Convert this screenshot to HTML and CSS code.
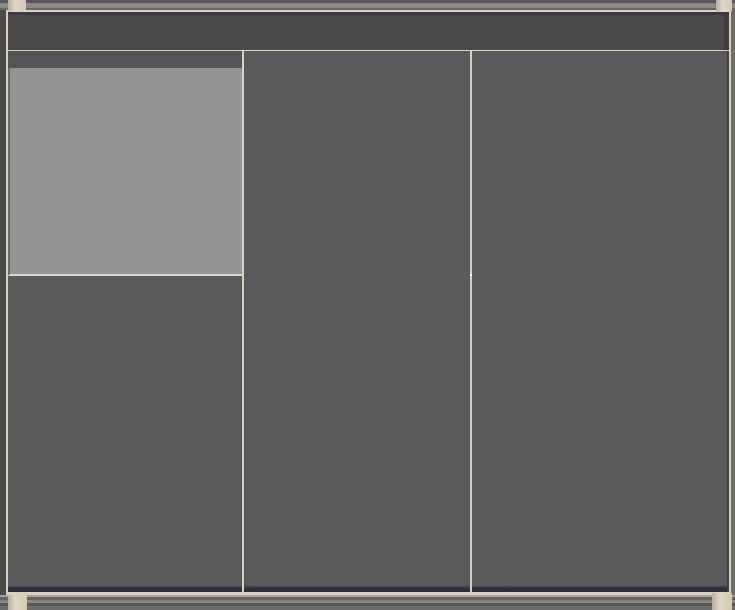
FILE: index.html
```html
<!DOCTYPE html>
<html>
<head>
<meta charset="utf-8">
<link rel="stylesheet" href="styles.css">
</head>
<body>
<div class="frame">
  <div class="top-band"></div>
  <div class="middle">
    <div class="window">
      <div class="header"></div>
      <div class="cols">
        <div class="col col-left">
          <div class="left-strip"></div>
          <div class="left-panel"></div>
          <div class="left-rest"></div>
        </div>
        <div class="col col-mid"><span class="dot"></span></div>
        <div class="col col-right"></div>
      </div>
    </div>
  </div>
  <div class="bottom-band"></div>
  <span class="knob knob-tl"></span>
  <span class="knob knob-tr"></span>
  <span class="knob knob-bl"></span>
  <span class="knob knob-br"></span>
</div>
</body>
</html>
```
FILE: styles.css
```css
html, body {
  margin: 0;
  padding: 0;
  background: #4e4c4a;
}
.frame {
  position: relative;
  width: 735px;
  height: 610px;
  display: flex;
  flex-direction: column;
  background: #4c4a48;
  overflow: hidden;
}
.top-band {
  height: 10px;
  flex: none;
  background: linear-gradient(to bottom, #595755 0, #595755 3px, #8c8884 3px, #8c8884 8px, #6a6866 8px);
}
.middle {
  flex: 1;
  display: flex;
  padding: 0 4px 0 6px;
  background: linear-gradient(to right, #4c4a48 0, #4c4a48 6px, transparent 6px), #6e6a66;
}
.window {
  flex: 1;
  display: flex;
  flex-direction: column;
  border-top: 2px solid #dcd5c6;
  border-left: 2px solid #d6d0c2;
  border-right: 2px solid #d6d0c2;
  border-bottom: 3px solid #d8d1c0;
  background: #5a5a5a;
}
.header {
  height: 35px;
  flex: none;
  border-top: 3px solid #3c3a42;
  border-bottom: 1px solid #d8d2c4;
  background: linear-gradient(to right, #4b4947 0, #4b4947 calc(100% - 5px), #3f3d3b calc(100% - 5px));
}
.cols {
  flex: 1;
  display: flex;
}
.col {
  position: relative;
  background: linear-gradient(to top, #2f2d37 0, #34323c 4px, #4a4852 6px, #5a5a5a 6px);
}
.col-left {
  width: 234px;
  flex: none;
  display: flex;
  flex-direction: column;
  border-right: 2px solid #d6d0c2;
}
.left-strip {
  height: 17px;
  flex: none;
  background: #555555;
}
.left-panel {
  height: 206px;
  flex: none;
  background: #939393;
  border-left: 2px solid #6a6a6a;
  border-bottom: 2px solid #dcd6c8;
}
.left-rest {
  flex: 1;
}
.col-mid {
  width: 226px;
  flex: none;
  border-right: 2px solid #d6d0c2;
}
.col-right {
  flex: 1;
  border-right: 2px solid #45423e;
}
.dot {
  position: absolute;
  right: -2px;
  top: 223px;
  width: 2px;
  height: 2px;
  background: #ffffff;
}
.bottom-band {
  height: 15px;
  flex: none;
  background: linear-gradient(to bottom, #a8a49c 0, #a8a49c 2px, #646260 2px, #646260 5px, #8a8682 5px, #8a8682 8px, #585654 8px, #585654 11px, #6e6c6a 11px);
}
.knob {
  position: absolute;
  background: linear-gradient(to right, #b9b09a, #e0d8c6 40%, #d4c9b0);
}
.knob-tl { left: 8px; top: 0; width: 18px; height: 11px; }
.knob-tr { left: 716px; top: 0; width: 16px; height: 11px; }
.knob-bl { left: 8px; top: 595px; width: 19px; height: 15px; }
.knob-br { left: 712px; top: 593px; width: 20px; height: 17px; }
```
